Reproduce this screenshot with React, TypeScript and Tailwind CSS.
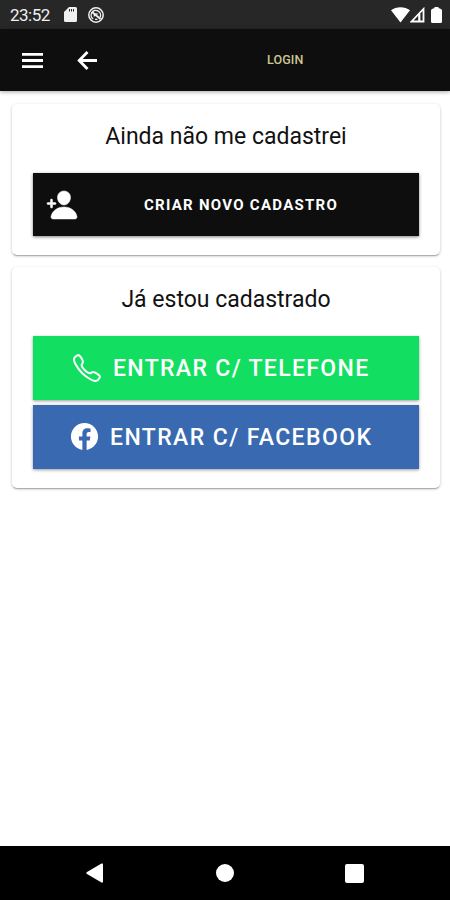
import type { ReactNode } from 'react';
import { IoCallOutline, IoLogoFacebook, IoPersonAdd } from 'react-icons/io5';

function StatusBar() {
  return (
    <div className="h-[29px] shrink-0 bg-[#272727] flex items-center pl-[10px] pr-2 text-[#f0f0f0]">
      <span className="w-[54px] text-[17px] leading-[29px] pt-px tracking-[-0.5px]">23:52</span>
      <svg width="13" height="15" viewBox="0 0 13 15" fill="currentColor" fillRule="evenodd">
        <path d="M5 0h6.500A1.500 1.500 0 0 1 13 1.500v12a1.500 1.500 0 0 1-1.500 1.500h-10A1.500 1.500 0 0 1 0 13.500V5zM5 2v2.500h1V2zM7 2v2.500h1V2zM9 2v2.500h1V2z" />
      </svg>
      <svg className="ml-[11px]" width="16" height="16" viewBox="0 0 16 16" fill="none" stroke="currentColor">
        <circle cx="8" cy="8" r="7.200" strokeWidth="1.500" />
        <path d="M5.200 12A4.700 4.700 0 1 1 12 10.300" strokeWidth="1.400" />
        <path d="M4 5l8.500 7" strokeWidth="1.900" />
        <path d="M6.300 9.500A2.200 2.200 0 0 1 9.800 7.300M7 12.400h2.500" strokeWidth="1.300" />
      </svg>
      <div className="ml-auto flex items-center text-white">
        <svg width="19" height="16" viewBox="0 0 19 16" fill="currentColor">
          <path d="M0 3.300C5.300-.9 13.700-.9 19 3.300L9.500 15.500z" />
        </svg>
        <svg width="15" height="16" viewBox="0 0 15 16" fill="none" stroke="currentColor" strokeWidth="1.800">
          <path d="M1.500 14.500L13.500 2v12.500z" />
          <path d="M9.300 7v7" strokeWidth="2.200" />
        </svg>
        <svg className="ml-[6px]" width="11" height="16" viewBox="0 0 11 16" fill="currentColor">
          <path d="M3.500 0h4v1l2.500 1Q11 2.500 11 3.500v11A1.500 1.500 0 0 1 9.500 16h-8A1.500 1.500 0 0 1 0 14.500v-11Q0 2.500 1 2l2.500-1z" />
        </svg>
      </div>
    </div>
  );
}

function Header() {
  return (
    <header className="h-[62px] shrink-0 bg-[#0e0e0e] flex items-center pl-[22px] text-white shadow-[0_1px_4px_rgba(0,0,0,0.35)]">
      <button type="button" aria-label="Menu">
        <svg width="21" height="15" viewBox="0 0 21 15" fill="currentColor">
          <path d="M0 0h21v2.800H0zM0 6.100h21v2.800H0zM0 12.200h21V15H0z" />
        </svg>
      </button>
      <button type="button" aria-label="Voltar" className="ml-[34px]">
        <svg width="20" height="19" viewBox="0 0 20 19" fill="none" stroke="currentColor" strokeWidth="2.800">
          <path d="M10.500 1L2.200 9.500l8.300 8.500M2.200 9.500H20" />
        </svg>
      </button>
      <h1 className="ml-[170px] pt-px text-[12.500px] font-medium text-[#cdc592] tracking-[0.1px]">LOGIN</h1>
    </header>
  );
}

function Card({ title, children }: { title: string; children: ReactNode }) {
  return (
    <section className="rounded-[5px] bg-white px-[21px] pb-[19px] shadow-[0_1px_3px_rgba(0,0,0,0.25),0_2px_1px_-1px_rgba(0,0,0,0.2)]">
      <h2 className="h-[69px] pt-[17px] text-center text-[23px] leading-[32px] text-[#111]">{title}</h2>
      {children}
    </section>
  );
}

export default function App() {
  return (
    <div className="flex h-[900px] w-[450px] flex-col overflow-hidden bg-white font-[Roboto,sans-serif]">
      <StatusBar />
      <Header />
      <main className="flex flex-1 flex-col gap-[12px] pl-[12px] pr-[10px] pt-[13px]">
        <Card title="Ainda não me cadastrei">
          <button
            type="button"
            className="flex h-[63px] w-[386px] items-center bg-[#0e0e0e] pl-[13px] text-white shadow-[0_1px_3px_rgba(0,0,0,0.5)]"
          >
            <IoPersonAdd size={32} className="stroke-white" strokeWidth={8} />
            <span className="ml-[66px] pt-[2px] whitespace-nowrap text-[15px] font-bold tracking-[1.270px]">CRIAR NOVO CADASTRO</span>
          </button>
        </Card>
        <Card title="Já estou cadastrado">
          <button
            type="button"
            className="flex h-[64px] w-[386px] items-center bg-[#12df61] pl-[38px] text-white shadow-[0_1px_3px_rgba(0,0,0,0.4)]"
          >
            <IoCallOutline size={32} />
            <span className="ml-[10px] pt-[2px] whitespace-nowrap text-[23px] font-medium tracking-[1.340px]">ENTRAR C/ TELEFONE</span>
          </button>
          <button
            type="button"
            className="mt-[5px] flex h-[64px] w-[386px] items-center bg-[#3969b1] pl-[36px] text-white shadow-[0_1px_3px_rgba(0,0,0,0.4)]"
          >
            <IoLogoFacebook size={31} className="mb-px" />
            <span className="ml-[10px] pt-[2px] whitespace-nowrap text-[23px] font-medium tracking-[1.400px]">ENTRAR C/ FACEBOOK</span>
          </button>
        </Card>
      </main>
      <nav className="flex h-[54px] shrink-0 items-center bg-black pl-[86px] text-white">
        <svg width="17" height="20" viewBox="0 0 17 20" fill="currentColor">
          <path d="M15.500.5Q17 0 17 1.500v17q0 1.500-1.500 1L1 11Q-.5 10 1 9z" />
        </svg>
        <span className="ml-[113px] h-[18px] w-[18px] rounded-full bg-white" />
        <span className="ml-[111px] h-[19px] w-[19px] rounded-[2px] bg-white" />
      </nav>
    </div>
  );
}
